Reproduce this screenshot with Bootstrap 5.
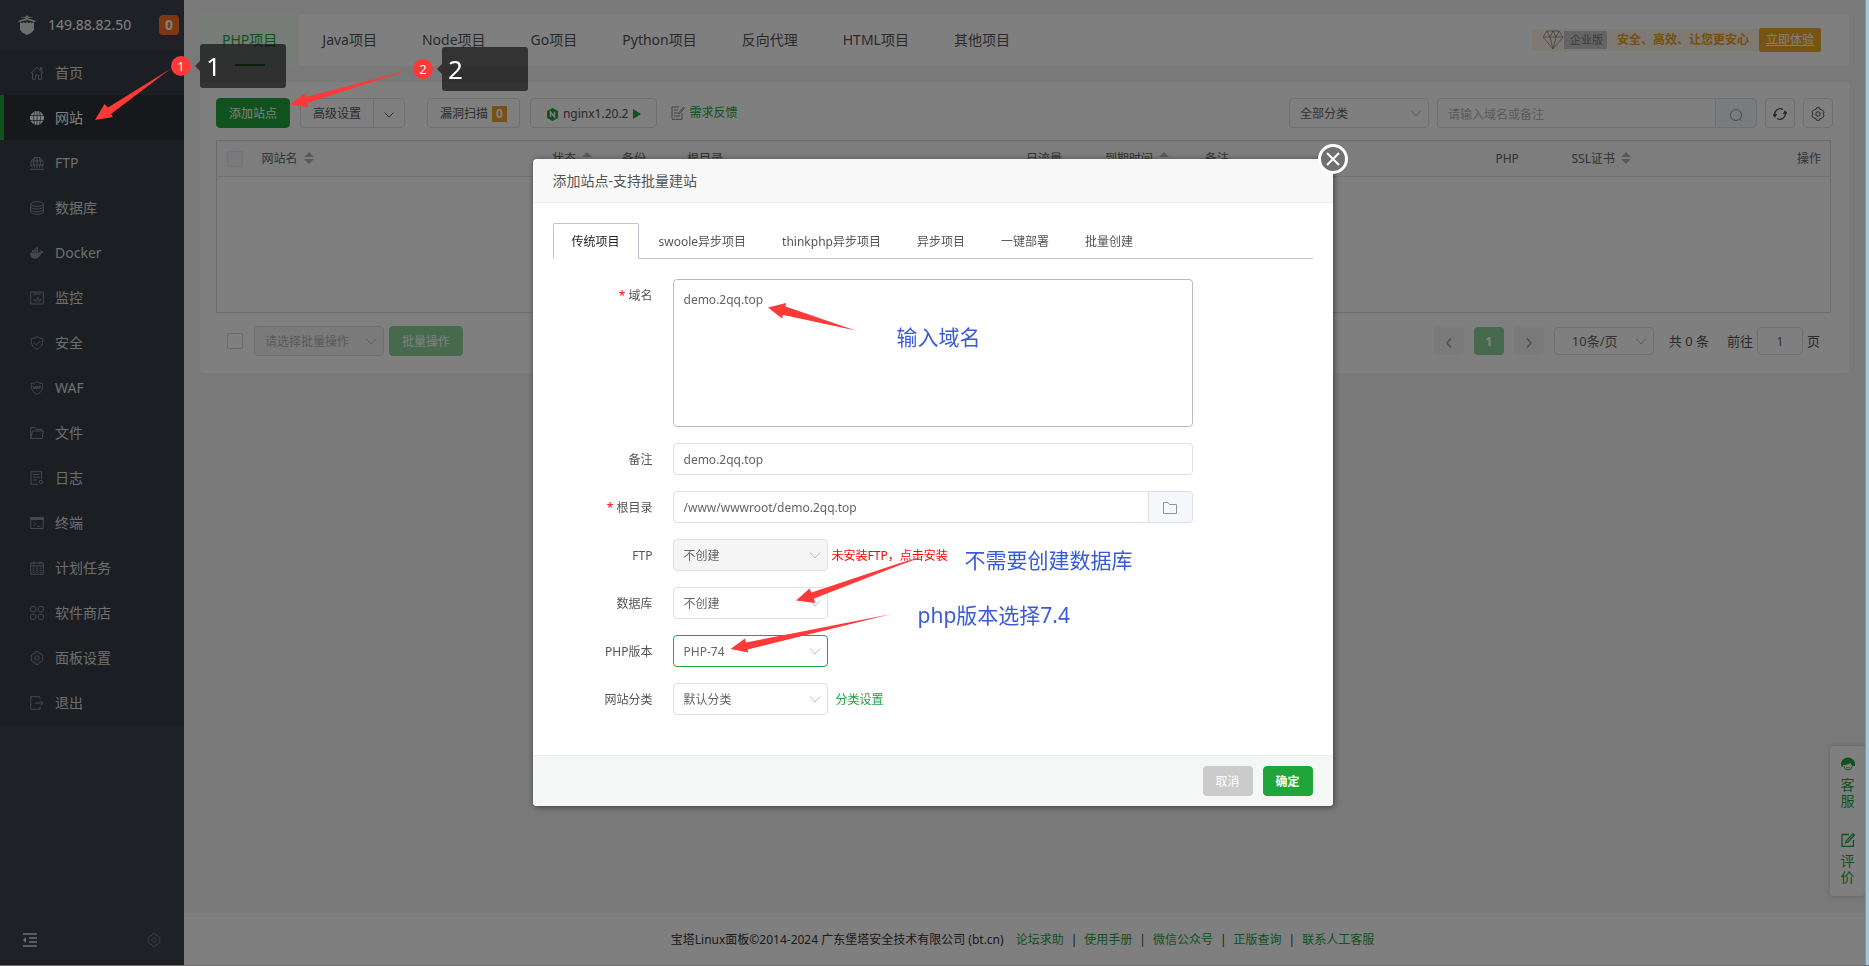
<!DOCTYPE html>
<html lang="zh-CN">
<head>
<meta charset="utf-8">
<meta name="viewport" content="width=device-width, initial-scale=1">
<title>宝塔Linux面板</title>
<link href="https://cdn.jsdelivr.net/npm/bootstrap@5.3.0/dist/css/bootstrap.min.css" rel="stylesheet">
<style>
:root{--bt-green:#20a53a;--bt-line:#dcdfe6;--bt-text:#555}
body{font-family:"Noto Sans","Noto Sans CJK SC",sans-serif;font-size:12px;line-height:20px;color:var(--bt-text);background:#f2f2f2;border-bottom:1px solid #6e6e6e;min-height:100vh}
a{color:var(--bt-green);text-decoration:none}
svg.ico{width:14px;height:14px;fill:none;stroke:currentColor;stroke-width:1;flex:none}
.edge{width:4px;background:#a3c8de;border-left:1px solid #7898a8;position:relative;z-index:1060}
/* sidebar */
.side{width:184px;background:#3c444d;color:#dcdcdc;font-size:14px}
.side-head{height:50px;padding:0 5px 8px 18px;color:#fff}
.count{width:20px;height:20px;border-radius:4px;background:#ff6f25;color:#fff;font-weight:700;font-size:14px;text-align:center}
.menu a{display:flex;align-items:center;gap:11px;height:45px;padding-left:26px;color:#dcdcdc;background:#363d45;border-left:4px solid transparent}
.menu a svg{color:#8a8f94}
.menu a.active{background:#2c3037;border-color:var(--bt-green);color:#fff}
.menu a.active svg{color:#fff}
.side-foot{height:52px;border-top:1px solid #434a53;padding:0 23px}
/* main */
.panel{background:#fff;border-radius:4px}
.kinds{height:52px;font-size:14px;overflow:hidden;gap:1px}
.kinds .kind{height:52px;line-height:52px;padding:0 22px;color:#555;position:relative}
.kinds .kind.active{background:#eef8f0;color:var(--bt-green)}
.kinds .kind.active::after{content:"";position:absolute;left:50%;bottom:0;width:30px;height:2px;margin-left:-15px;background:var(--bt-green)}
.promo{height:24px;font-size:12px;margin-right:28px;background:linear-gradient(#fff3e8,#fff3e8) 0 50%/100% 22px no-repeat;padding-left:10px;color:#e8a020}
.promo .edition{background:#c9c9c9;color:#777;font-size:11px;height:18px;line-height:18px;padding:0 4px 0 6px}
.promo strong{margin-left:10px}
.promo a{background:#efa926;color:#fff;border-radius:2px;height:24px;line-height:24px;padding:0 7px;margin-left:10px;text-decoration:underline}
.btn{--bs-btn-font-size:12px;--bs-btn-line-height:20px;--bs-btn-padding-y:4px;--bs-btn-padding-x:12px;--bs-btn-border-radius:4px;white-space:nowrap}
.bar .btn,.modal-footer .btn{padding-top:5px;padding-bottom:3px}
.btn-bt{--bs-btn-bg:#20a53a;--bs-btn-border-color:#20a53a;--bs-btn-color:#fff;--bs-btn-hover-bg:#1b9033;--bs-btn-hover-color:#fff;--bs-btn-disabled-bg:#8fd29c;--bs-btn-disabled-border-color:#8fd29c;--bs-btn-disabled-color:#fff;--bs-btn-disabled-opacity:1}
.btn-line{--bs-btn-border-color:#dcdfe6;--bs-btn-color:#555;--bs-btn-bg:#fff;--bs-btn-hover-border-color:#20a53a;--bs-btn-hover-color:#20a53a}
.form-control,.form-select{font-size:12px;line-height:20px;color:#666;border-color:var(--bt-line);border-radius:4px;padding:6px 10px 4px;min-height:0}
.form-control::placeholder{color:#b4b6bb}
.form-select{background-image:url("data:image/svg+xml,%3Csvg xmlns='http://www.w3.org/2000/svg' viewBox='0 0 12 12'%3E%3Cpath fill='none' stroke='%23b4b8c0' d='M1 3.5 6 9l5-5.5'/%3E%3C/svg%3E");background-size:12px;background-position:right 6px center}
.h30{height:30px;padding-top:5px;padding-bottom:3px}
.bar .sq{width:30px;height:30px;padding:0}
.vuln{background:#f0a030;line-height:16px}
.sites{table-layout:fixed;border:1px solid #d8d8d8;height:173px;margin:0}
.sites-box{margin:12px 2px 12px 0}
.sites th{height:36px;background:#fafafa;font-weight:400;padding:0 9px 0 10px;vertical-align:middle;color:#666;border-bottom:1px solid #e4e6ee;white-space:nowrap}
.sort{width:10px;height:12px;margin-left:6px;fill:#b4b4b4;vertical-align:-1px}
.tick{width:16px;height:16px;margin:0;border-color:#d0d3da;display:block}
.form-check-input.tick{border-radius:2px}
.pager{font-size:13px}
.pager .btn{--bs-btn-font-size:13px;height:28px;width:30px;padding:0}
.pg-off{--bs-btn-bg:#f4f4f5;--bs-btn-border-color:#f4f4f5;--bs-btn-color:#a0a3a8}
.foot{height:52px;background:#fff;color:#333;padding:2px 4px 0 0}
.foot a{white-space:nowrap}
.foot i{font-style:normal;margin:0 7px}
/* floating service box */
.service{position:absolute;right:4px;bottom:69px;width:35px;height:150px;background:#fff;border-radius:4px;box-shadow:0 0 4px rgba(0,0,0,.2);font-size:14px;line-height:16px;padding:11px 10px 0;text-align:center}
.service a{display:flex;flex-direction:column;align-items:center;gap:6px;height:76px}
.service span{display:block;width:14px}
/* dialog */
.modal{background:rgba(0,0,0,.5);width:calc(100% - 4px);height:calc(100% - 1px);overflow:hidden}
.modal-dialog{max-width:800px}
.modal-content{border:0;border-radius:4px;box-shadow:1px 1px 6px rgba(0,0,0,.5)}
.modal-header{height:44px;padding:0 20px;background:#f8f8f8;border-bottom:1px solid #eee}
.modal-title{font-size:14px;line-height:20px;font-weight:400;color:#555}
.modal-body{padding:20px 20px 40px}
.modal-footer{padding:10px 20px;background:#f5f7f7;border-top:1px solid #eee;gap:10px;border-radius:0 0 4px 4px}
.modal-footer>*{margin:0}
.modal-footer .btn{width:50px;padding-left:0;padding-right:0}
.nav-tabs{border-color:#c4c1d6;margin-bottom:20px}
.nav-tabs .nav-link{font-size:12px;line-height:20px;padding:8px 17px 6px;color:#555;border-radius:2px 2px 0 0}
.nav-tabs .nav-link.active{color:#222;padding-left:18px;padding-right:18px;margin-right:2px;border-color:#c4c1d6 #c4c1d6 #fff}
.field{display:flex;margin-bottom:16px}
.field>label{width:100px;margin-right:20px;padding-top:1px;text-align:right;line-height:31px;flex:none}
.field>a{padding-top:2px}
.field label i{color:red;font-style:normal;margin-right:3px}
.wide{width:520px}
.w155{width:155px}
.close-x{position:absolute;right:-15px;top:-15px;width:30px;height:30px;border:3px solid #fff;border-radius:50%;background:#707070;padding:0;display:flex;align-items:center;justify-content:center}
/* tutorial marks */
.arrows{position:absolute;left:0;top:0;pointer-events:none;fill:#fd3a37;overflow:visible;z-index:1070}
.say{position:absolute;font-size:21px;line-height:28px;color:#3a5bd6;white-space:nowrap}
.dot{position:absolute;z-index:1071;width:20px;height:20px;border-radius:50%;background:#fd3a37;color:#fff;font-size:13px;text-align:center}
.tip{position:absolute;z-index:1071;width:86px;height:44px;border-radius:3px;background:rgba(0,0,0,.6);color:#fff;font-size:26px;line-height:44px;padding-left:6px}
.tip::before{content:"";position:absolute;left:-5px;top:17px;border:5px solid transparent;border-left:0;border-right-color:#333}
</style>
</head>
<body class="d-flex position-relative">
<svg width="0" height="0" class="position-absolute">
 <defs>
  <symbol id="gear" viewBox="0 0 14 14"><path d="M5.500.7h3l.6 1.900 2 .2 2 2.200-1 2 1 2-2 2.200-2 .2-.6 1.900h-3l-.6-1.900-2-.2-2-2.200 1-2-1-2 2-2.200 2-.2z"/><circle cx="7" cy="7" r="2.200"/></symbol>
  <symbol id="updown" viewBox="0 0 10 12"><path d="M5 0 10 5H0zM5 12l5-5H0z"/></symbol>
 </defs>
</svg>

<div class="d-flex flex-grow-1">
 <aside class="side d-flex flex-column flex-shrink-0">
  <div class="side-head d-flex align-items-center pt-2">
   <svg width="18" height="20" viewBox="0 0 18 20" fill="#ddd"><path d="M9 0l1 1.500 6 1.500-7-.3L2 3l6-1.500zM9 3l9 3-1 1-8-2-8 2-1-1zM2 8l1-1 1 1.500L5.500 7 7 8.300 9 7l2 1.300L12.500 7 14 8.500l1-1.500 1 1v7l-3 3-4 2-4-2-3-3z"/></svg>
   <span class="ms-2 ps-1 me-auto">149.88.82.50</span><span class="count">0</span>
  </div>
  <nav class="menu">
   <a href="#"><svg class="ico" viewBox="0 0 14 14"><path d="M.7 7.500 7 1.300l6.300 6.200M2.500 6.500v6.800h3V9h3v4.300h3V6.500M10.500 4V1.500h1.500v4"/></svg>首页</a>
   <a href="#" class="active"><svg class="ico" viewBox="0 0 14 14"><circle cx="7" cy="7" r="6.500" fill="currentColor"/><path stroke="#2c3037" stroke-width=".7" d="M0 4.500h14M0 9.500h14M7 0v14M4.500.5Q2.500 7 4.500 13.500M9.500.5q2 6.500 0 13"/></svg>网站</a>
   <a href="#"><svg class="ico" viewBox="0 0 14 14"><path d="M2.300 11.500A6.200 6.200 0 1 1 11.700 11.500M1 5h12M.7 9h12.600M7 1v11M4.500 1.500Q2.500 7 4.500 11.500M9.500 1.500q2 5.500 0 10M0 13.300h14"/></svg>FTP</a>
   <a href="#"><svg class="ico" viewBox="0 0 14 14"><ellipse cx="7" cy="3" rx="6.300" ry="2.300"/><path d="M.7 3v8c0 3 12.600 3 12.600 0V3M.7 5.700c0 3 12.600 3 12.600 0M.7 8.400c0 3 12.600 3 12.600 0"/></svg>数据库</a>
   <a href="#"><svg class="ico" viewBox="0 0 14 14"><path fill="currentColor" stroke="none" d="M0 6.500h10.300q.2-1-.3-2.200l.8-.6q.8.700 1 1.600 1-.1 2 .5-.7 1.600-2.400 1.500Q9.500 12.800 4.500 12.800.3 12.500 0 6.500zM2 4h1.800v2H2zM4.200 4H6v2H4.200zM6.400 4h1.800v2H6.400zM6.400 1.300h1.800v2.200H6.400zM4.200 2.500H6v1.200H4.200z"/></svg>Docker</a>
   <a href="#"><svg class="ico" viewBox="0 0 14 14"><path d="M.7 1h12.600v12H.7zM3 3h8M3 9.500l1.500-1 1.500 2L8 6.500l1.500 4L11 8"/></svg>监控</a>
   <a href="#"><svg class="ico" viewBox="0 0 14 14"><path d="M7 .7Q9.500 2.500 12.700 2.500C13 8 11.500 11.500 7 13.300 2.500 11.500 1 8 1.300 2.500 4.500 2.500 7 .7 7 .7zM4 6.800l2.300 2.200L10.300 5"/></svg>安全</a>
   <a href="#"><svg class="ico" viewBox="0 0 14 14"><path d="M7 .7Q9.500 2.500 12.700 2.500C13 8 11.500 11.500 7 13.300 2.500 11.500 1 8 1.300 2.500 4.500 2.500 7 .7 7 .7zM3 5l.8 3 .8-2 .8 2L6 5M6.500 8l.8-3L8 8M9 8V5h2M9 6.500h1.500"/></svg>WAF</a>
   <a href="#"><svg class="ico" viewBox="0 0 14 14"><path d="M.7 12.500V1.500h4L6 3.300h6.500M.7 12.500h11.500L13.300 5H2.500z"/></svg>文件</a>
   <a href="#"><svg class="ico" viewBox="0 0 14 14"><path d="M8 13.300H1V.7h10.500V8M3 3.500h6.500M3 6.200h6.500M3 9h4"/><circle cx="11" cy="11" r="1.700"/></svg>日志</a>
   <a href="#"><svg class="ico" viewBox="0 0 14 14"><path d="M.7 1.500h12.600v11H.7zM3.500 6l2.200 2-2.200 2M7 10.300h3.500"/><path fill="currentColor" d="M.7 1.500h12.600v2H.7z"/></svg>终端</a>
   <a href="#"><svg class="ico" viewBox="0 0 14 14"><path d="M.7 2h12.600v11.300H.7zM.7 4.800h12.600M4 .3v3M10 .3v3M2.500 7.200h2m1.500 0h2m1.500 0h2M2.500 9.300h2m1.500 0h2m1.500 0h2M2.500 11.300h2m1.500 0h2m1.500 0h2"/></svg>计划任务</a>
   <a href="#"><svg class="ico" viewBox="0 0 14 14"><rect x=".7" y=".7" width="5" height="5" rx="1"/><rect x="8.300" y=".7" width="5" height="5" rx="1"/><rect x=".7" y="8.300" width="5" height="5" rx="1"/><rect x="8.300" y="8.300" width="5" height="5" rx="1"/></svg>软件商店</a>
   <a href="#"><svg class="ico"><use href="#gear"/></svg>面板设置</a>
   <a href="#"><svg class="ico" viewBox="0 0 14 14"><path d="M10 3V.7H.7v12.600H10V11M5 7h8M10.500 4.500 13 7l-2.500 2.500"/></svg>退出</a>
  </nav>
  <div class="side-foot d-flex align-items-center justify-content-between mt-auto">
   <svg class="ico" viewBox="0 0 14 14"><path stroke-width="1.500" d="M0 1h14M6 5h8M6 9h8M0 13h14"/><path fill="currentColor" stroke="none" d="M3 4v6L0 7z"/></svg>
   <svg class="ico" opacity=".35"><use href="#gear"/></svg>
  </div>
 </aside>

 <div class="d-flex flex-column flex-grow-1">
  <main class="px-3 flex-grow-1">
   <div class="panel kinds d-flex align-items-center mb-3" style="margin-top:14px">
    <a href="#" class="kind active">PHP项目</a><a href="#" class="kind">Java项目</a><a href="#" class="kind">Node项目</a><a href="#" class="kind">Go项目</a><a href="#" class="kind">Python项目</a><a href="#" class="kind">反向代理</a><a href="#" class="kind">HTML项目</a><a href="#" class="kind">其他项目</a>
    <div class="promo d-flex align-items-center ms-auto">
     <svg width="22" height="20" viewBox="0 0 22 20" fill="none" stroke="#999"><path d="M5 1h12l4 6-10 12L1 7zM1 7h20M5 1l3 6 3 12 3-12 3-6M8 7l3-6 3 6"/></svg>
     <span class="edition">企业版</span><strong>安全、高效、让您更安心</strong><a href="#">立即体验</a>
    </div>
   </div>

   <section class="panel p-3">
    <div class="bar d-flex align-items-center">
     <button class="btn btn-bt">添加站点</button>
     <div class="btn-group" style="margin-left:10px"><button class="btn btn-line">高级设置</button><button class="btn btn-line px-2" aria-label="更多"><svg class="ico align-middle" viewBox="0 0 14 14"><path d="M2.500 4.500 7 9l4.500-4.500"/></svg></button></div>
     <button class="btn btn-line d-flex gap-1 align-items-center" style="margin:0 10px 0 22px">漏洞扫描<b class="vuln text-white px-1">0</b></button>
     <button class="btn btn-line d-flex align-items-center gap-1" style="padding-left:15px;padding-right:14px"><svg width="13" height="13" viewBox="0 0 13 13"><path fill="#20a53a" d="M6.500 0 12 3v7l-5.500 3L1 10V3z"/><path fill="none" stroke="#fff" stroke-width="1.400" d="M4.500 9V4l4 5V4"/></svg>nginx1.20.2<svg width="10" height="10" viewBox="0 0 10 10"><path fill="#20a53a" d="M1 0l8 5-8 5z"/></svg></button>
     <a href="#" class="d-flex align-items-center" style="margin-left:14px"><svg class="ico me-1" viewBox="0 0 14 14" style="color:#888"><path d="M8 1H1v12.300h10V7M3 4h4M3 7h4M3 10h6M12.500 1 8 6.500l-.5 1.500 1.500-.7L13.300 2z"/></svg>需求反馈</a>
     <div class="d-flex gap-2 ms-auto">
      <select class="form-select h30" style="width:140px" aria-label="分类"><option>全部分类</option></select>
      <div class="input-group" style="width:320px"><input class="form-control h30" placeholder="请输入域名或备注" aria-label="搜索"><button class="btn btn-line px-0" style="width:42px;background:#f5f7fa" aria-label="搜索"><svg class="ico align-middle" viewBox="0 0 14 14" style="color:#999"><circle cx="7" cy="7" r="5.500"/><path d="M10.500 11l2 2"/></svg></button></div>
      <button class="btn btn-line sq" aria-label="刷新"><svg class="ico align-middle" viewBox="0 0 14 14"><path stroke-width="1.400" d="M2 9A5.500 5.500 0 0 1 10 2.500M12 5A5.500 5.500 0 0 1 4 11.500M0 7.500 2 9.500 3.500 7M14 6.500l-2-2L10.500 7"/></svg></button>
      <button class="btn btn-line sq" aria-label="设置"><svg class="ico align-middle"><use href="#gear"/></svg></button>
     </div>
    </div>

    <div class="sites-box">
    <table class="table table-borderless sites">
     <colgroup><col style="width:35px"><col style="width:18%"><col style="width:70px"><col style="width:65px"><col style="width:21%"><col style="width:79px"><col style="width:100px"><col style="width:18%"><col style="width:76px"><col style="width:120px"><col></colgroup>
     <thead><tr>
      <th><input type="checkbox" class="form-check-input tick" style="background:#edf2fc" disabled aria-label="全选"></th>
      <th>网站名<svg class="sort"><use href="#updown"/></svg></th>
      <th>状态<svg class="sort"><use href="#updown"/></svg></th>
      <th>备份</th><th>根目录</th><th>日流量</th>
      <th>到期时间<svg class="sort"><use href="#updown"/></svg></th>
      <th>备注</th><th>PHP</th>
      <th>SSL证书<svg class="sort"><use href="#updown"/></svg></th>
      <th class="text-end">操作</th>
     </tr></thead>
     <tbody><tr><td colspan="11"></td></tr></tbody>
    </table>
    </div>

    <div class="d-flex align-items-center bar" style="padding:1px 9px 1px 0">
     <input type="checkbox" class="form-check-input tick" style="margin:0 11px" aria-label="选择全部">
     <select class="form-select h30" style="width:130px;background-color:#f5f5f5;color:#b4b4b4" disabled aria-label="批量"><option>请选择批量操作</option></select>
     <button class="btn btn-bt" style="margin-left:5px" disabled>批量操作</button>
     <div class="pager d-flex align-items-center ms-auto">
      <button class="btn pg-off p-0" aria-label="上一页"><svg class="ico align-middle" viewBox="0 0 14 14"><path stroke-width="1.600" d="M9 2.500 5 7l4 4.500"/></svg></button>
      <button class="btn p-0 text-white fw-bold" style="background:#8fd29c;margin:0 10px">1</button>
      <button class="btn pg-off p-0" aria-label="下一页"><svg class="ico align-middle" viewBox="0 0 14 14"><path stroke-width="1.600" d="M5 2.500 9 7l-4 4.500"/></svg></button>
      <select class="form-select py-0" style="width:100px;height:28px;font-size:13px;margin:0 15px 0 10px;padding-left:17px" aria-label="每页"><option>10条/页</option></select>
      <span>共 0 条</span><label style="margin-left:18px" for="go">前往</label>
      <input id="go" class="form-control text-center mx-1 py-0" style="width:46px;height:28px" value="1"><span class="me-1">页</span>
     </div>
    </div>
   </section>
  </main>
  <footer class="foot d-flex align-items-center justify-content-center">
   <span style="margin-right:12px">宝塔Linux面板©2014-2024 广东堡塔安全技术有限公司 (bt.cn)</span>
   <a href="#">论坛求助</a><i>|</i><a href="#">使用手册</a><i>|</i><a href="#">微信公众号</a><i>|</i><a href="#">正版查询</a><i>|</i><a href="#">联系人工客服</a>
  </footer>
 </div>
</div>
<div class="edge flex-shrink-0"></div>

<div class="service">
 <a href="#"><svg class="ico" viewBox="0 0 14 14"><path fill="currentColor" stroke="none" d="M0 7a7 6.500 0 0 1 14 0v2h-2Q10 8.500 9.500 6 6 8.500 2 8v1.500H.5z"/><path d="M2.500 9Q4 13 7 13t4.500-4M5.500 10.500Q7 11.500 8.500 10.500"/></svg><span>客服</span></a>
 <a href="#"><svg class="ico" viewBox="0 0 14 14"><path stroke-width="1.300" d="M8 1.500H1v11.800h11.500V7M12 .8l1.300 1.400L7 9l-2.300.8L5.500 7.500z"/></svg><span>评价</span></a>
</div>

<div class="modal d-block" role="dialog" aria-labelledby="dlg">
 <div class="modal-dialog modal-dialog-centered">
  <div class="modal-content">
   <div class="modal-header"><h1 class="modal-title" id="dlg">添加站点-支持批量建站</h1></div>
   <div class="modal-body">
    <ul class="nav nav-tabs">
     <li class="nav-item"><button class="nav-link active">传统项目</button></li>
     <li class="nav-item"><button class="nav-link">swoole异步项目</button></li>
     <li class="nav-item"><button class="nav-link">thinkphp异步项目</button></li>
     <li class="nav-item"><button class="nav-link">异步项目</button></li>
     <li class="nav-item"><button class="nav-link">一键部署</button></li>
     <li class="nav-item"><button class="nav-link">批量创建</button></li>
    </ul>
    <form>
     <div class="field"><label for="dom"><i>*</i>域名</label><textarea id="dom" class="form-control wide" style="height:148px;padding-top:10px;border-color:#bbb;resize:none">demo.2qq.top</textarea></div>
     <div class="field"><label for="ps">备注</label><input id="ps" class="form-control wide" value="demo.2qq.top"></div>
     <div class="field"><label for="root"><i>*</i>根目录</label><div class="input-group wide"><input id="root" class="form-control" value="/www/wwwroot/demo.2qq.top"><button type="button" class="btn btn-line px-0" style="width:45px;background:#f5f7fa" aria-label="选择目录"><svg class="ico" viewBox="0 0 14 14" style="color:#909399"><path d="M.5 12.500V1.500h4.500l1.500 2h7v9z"/></svg></button></div></div>
     <div class="field align-items-center"><label for="ftp">FTP</label><select id="ftp" class="form-select w155" style="background-color:#f5f5f5" disabled><option>不创建</option></select><a href="#" class="ms-1" style="color:red">未安装FTP，点击安装</a></div>
     <div class="field"><label for="db">数据库</label><select id="db" class="form-select w155"><option>不创建</option></select></div>
     <div class="field"><label for="php">PHP版本</label><select id="php" class="form-select w155" style="border-color:#20a53a"><option>PHP-74</option></select></div>
     <div class="field mb-0 align-items-center"><label for="cat">网站分类</label><select id="cat" class="form-select w155"><option>默认分类</option></select><a href="#" class="ms-2">分类设置</a></div>
    </form>
   </div>
   <div class="modal-footer">
    <button class="btn text-white" style="background:#cbcbcb">取消</button>
    <button class="btn btn-bt fw-bold">确定</button>
   </div>
   <button class="close-x" aria-label="关闭"><svg width="16" height="16" viewBox="0 0 16 16" stroke="#fff" stroke-width="2"><path d="M2 2l12 12M14 2 2 14"/></svg></button>
   <svg class="arrows" width="800" height="647" viewBox="533 159 800 647"><path d="M768 307.500 786 303l-.5 3.500 70 24L783 315l-1 3.500zM796 600.500l13.500-12 2 4L900 563l28-8-28 10-86 33.500 1 4.500zM730.500 649l14.500-10.500 1 4L891.500 614l-144 35.500 1 3z"/></svg>
   <span class="say" style="left:364px;top:164px">输入域名</span>
   <span class="say" style="left:432px;top:387px">不需要创建数据库</span>
   <span class="say" style="left:385px;top:442px">php版本选择7.4</span>
  </div>
 </div>
</div>

<svg class="arrows" width="430" height="130" viewBox="0 0 430 130"><path d="M95 120l9.500-16 3.500 3.500L171 68.500 111 114l2 3zM290 104.500l14.500-11L306 97l105-27.500L307 103l1.500 4.500z"/></svg>
<span class="dot" style="left:171px;top:56px">1</span><span class="tip" style="left:200px;top:44px">1</span>
<span class="dot" style="left:413px;top:59px">2</span><span class="tip" style="left:442px;top:47px">2</span>
<script src="https://cdn.jsdelivr.net/npm/bootstrap@5.3.0/dist/js/bootstrap.bundle.min.js"></script>
</body>
</html>
